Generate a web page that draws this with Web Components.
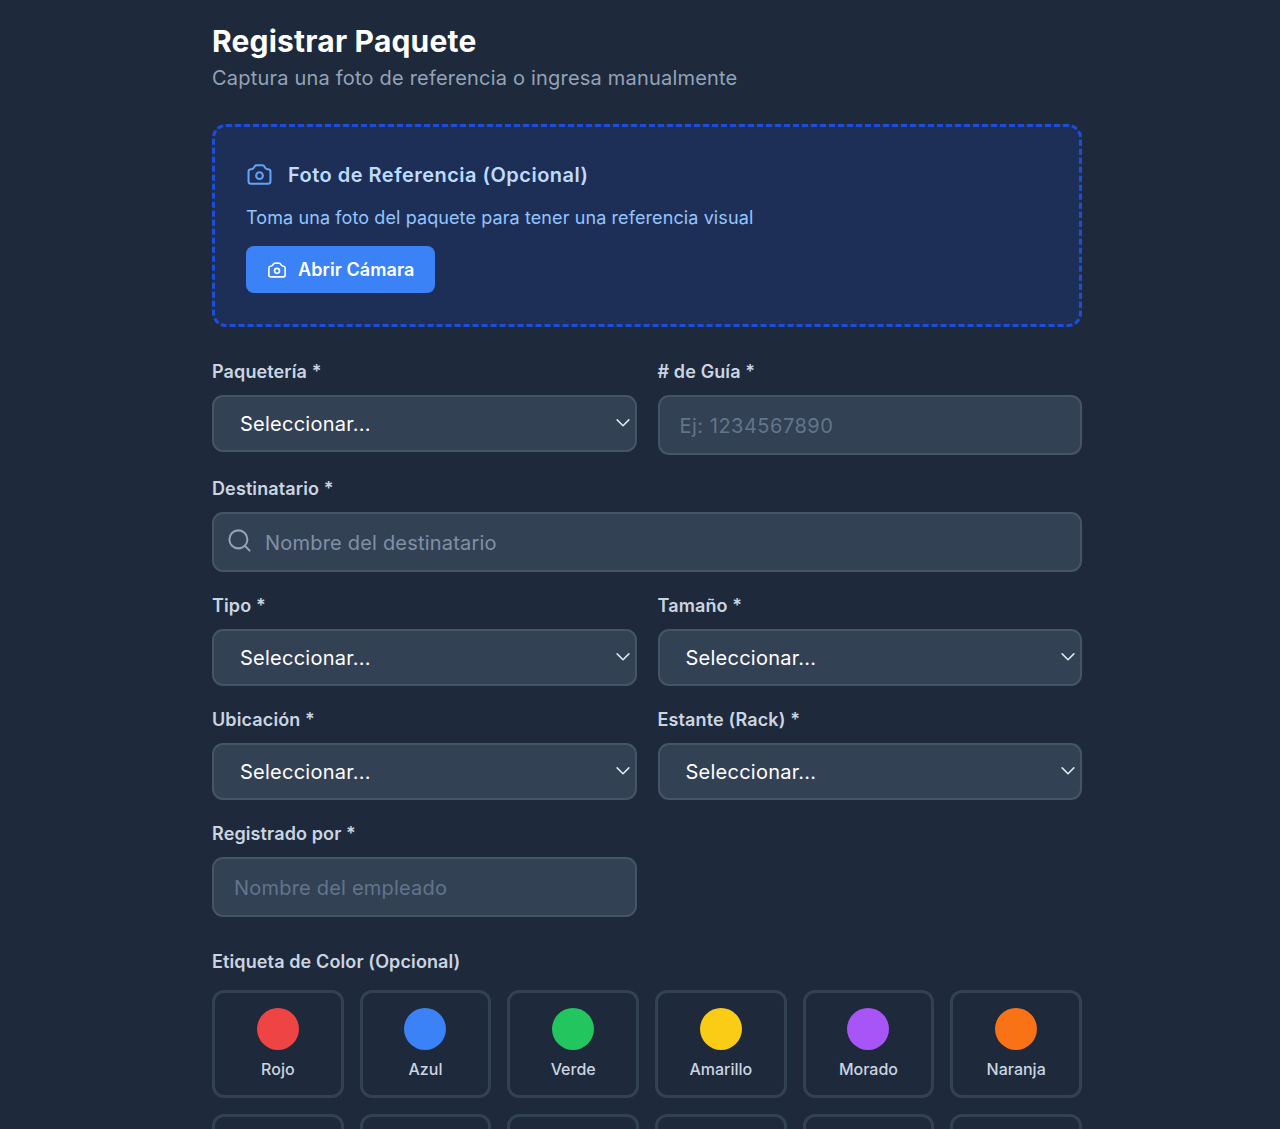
<!DOCTYPE html>
<html lang="es"><head><meta charset="utf-8"><title>Registrar Paquete</title>
<style>
html,body{margin:0;height:1129px;overflow:hidden;background:#1e293b}
body{font-family:Inter,"Noto Sans",sans-serif;color:#fff;-webkit-font-smoothing:antialiased}
</style></head><body>
<register-page></register-page>
<script>
const CAM='<svg viewBox="0 0 24 24" fill="none" stroke="currentColor" stroke-width="2" stroke-linecap="round" stroke-linejoin="round"><path d="M6.827 6.175A2.31 2.31 0 0 1 5.186 7.23c-.38.054-.757.112-1.134.175C2.999 7.58 2.25 8.507 2.25 9.574V18a2.25 2.25 0 0 0 2.25 2.25h15A2.25 2.25 0 0 0 21.75 18V9.574c0-1.067-.75-1.994-1.802-2.169a47.865 47.865 0 0 0-1.134-.175 2.31 2.31 0 0 1-1.64-1.055l-.822-1.316a2.192 2.192 0 0 0-1.736-1.039 48.774 48.774 0 0 0-5.232 0 2.192 2.192 0 0 0-1.736 1.039l-.821 1.316Z"/><circle cx="12" cy="13" r="3"/></svg>';
function def(name,css,html){customElements.define(name,class extends HTMLElement{constructor(){super();this.attachShadow({mode:'open'}).innerHTML='<style>'+css+'</style>'+(typeof html==='function'?html(this):html)}})}

def('photo-card',`:host{display:block;box-sizing:border-box;height:203px;border:3px dashed #1d4ed8;border-radius:14px;background:#1e2f57;padding:28px 32px 0 31px}
.h{display:flex;align-items:center;gap:15px;height:40px;font-size:20px;font-weight:600;color:#bfdbfe;letter-spacing:.48px}
.h svg{width:27px;height:27px;color:#60a5fa;stroke-width:1.8;margin-top:-2px}
p{margin:10px 0 0;font-size:18px;line-height:26px;color:#93c5fd;letter-spacing:.1px}
.b{display:inline-flex;align-items:center;gap:11px;box-sizing:border-box;height:47px;margin-top:15px;padding:0 21px;border-radius:8px;background:#3b82f6;color:#fff;font-size:18px;font-weight:600;letter-spacing:.08px}
.b svg{width:20px;height:20px;stroke-width:1.9}`,
`<div class="h">${CAM}<span>Foto de Referencia (Opcional)</span></div><p>Toma una foto del paquete para tener una referencia visual</p><div class="b">${CAM}<span>Abrir Cámara</span></div>`);

def('form-field',`:host{display:block;min-width:0}
label{display:block;font-size:18px;font-weight:600;line-height:24px;color:#cbd5e1;letter-spacing:.12px;margin-bottom:var(--label-gap,11px)}`,
`<label><slot name="label"></slot></label><slot></slot>`);

def('select-box',`:host{display:flex;align-items:center;box-sizing:border-box;height:57px;padding:0 3px 0 26px;background:#334155;border:2px solid #465468;border-radius:11px;color:#fff;font-size:20px;font-weight:400;letter-spacing:.25px}
span{flex:1}svg{width:18px;height:18px;color:#e2e8f0;margin-top:-2px}`,
`<span><slot></slot></span><svg viewBox="0 0 20 20" fill="none" stroke="currentColor" stroke-width="1.7" stroke-linecap="round" stroke-linejoin="round"><path d="M3.500 6.500 10 13l6.500-6.500"/></svg>`);

def('text-box',`:host{display:flex;align-items:center;box-sizing:border-box;height:60px;padding:1px 20px 0;background:#334155;border:2px solid #465468;border-radius:11px;color:#64748b;font-size:20px;letter-spacing:.2px;gap:12px}
:host([search]){color:#8190a5;padding-left:13px}
svg{width:27px;height:27px;color:#94a3b8;margin:-5px 0 0 -1px;flex:none}`,
h=>(h.hasAttribute('search')?`<svg viewBox="0 0 24 24" fill="none" stroke="currentColor" stroke-width="1.8" stroke-linecap="round"><circle cx="11" cy="11" r="8"/><path d="m21 21-4.300-4.300"/></svg>`:'')+`<span><slot></slot></span>`);

def('color-tile',`:host{display:flex;flex-direction:column;align-items:center;box-sizing:border-box;height:108px;padding-top:15px;border:3px solid #334155;border-radius:12px;color:#cbd5e1;font-size:16px;font-weight:500}
i{display:block;width:42px;height:42px;border-radius:50%;background:var(--c)}
span{margin-top:8px;line-height:23px}`,
h=>`<i style="--c:${h.getAttribute('color')||'transparent'}"></i><span><slot></slot></span>`);

def('form-row',`:host{display:grid;grid-template-columns:1fr 1fr;gap:21px}`,`<slot></slot>`);
def('color-grid',`:host{display:grid;grid-template-columns:repeat(6,1fr);gap:16px}`,`<slot></slot>`);

def('register-page',`:host{display:block;width:870px;margin:0 auto 0 212px;padding-top:20px}
h1{margin:0;font-size:30px;line-height:42px;font-weight:700;color:#fff;letter-spacing:.2px}
.s{font-size:20px;line-height:30px;color:#94a3b8;margin:1px 0 31px;letter-spacing:.2px}`,
`<h1>Registrar Paquete</h1><div class="s">Captura una foto de referencia o ingresa manualmente</div>
<photo-card></photo-card>
<form-row style="margin-top:33px"><form-field><span slot="label">Paquetería *</span><select-box>Seleccionar...</select-box></form-field><form-field><span slot="label"># de Guía *</span><text-box style="letter-spacing:.5px">Ej: 1234567890</text-box></form-field></form-row>
<form-field style="margin-top:22px"><span slot="label">Destinatario *</span><text-box search>Nombre del destinatario</text-box></form-field>
<form-row style="margin-top:22px"><form-field><span slot="label">Tipo *</span><select-box>Seleccionar...</select-box></form-field><form-field><span slot="label">Tamaño *</span><select-box>Seleccionar...</select-box></form-field></form-row>
<form-row style="margin-top:22px"><form-field><span slot="label">Ubicación *</span><select-box>Seleccionar...</select-box></form-field><form-field><span slot="label">Estante (Rack) *</span><select-box>Seleccionar...</select-box></form-field></form-row>
<form-row style="margin-top:22px"><form-field><span slot="label">Registrado por *</span><text-box>Nombre del empleado</text-box></form-field><div></div></form-row>
<form-field style="margin-top:33px;--label-gap:16px"><span slot="label">Etiqueta de Color (Opcional)</span>
<color-grid><color-tile color="#ef4444">Rojo</color-tile><color-tile color="#3b82f6">Azul</color-tile><color-tile color="#22c55e">Verde</color-tile><color-tile color="#facc15">Amarillo</color-tile><color-tile color="#a855f7">Morado</color-tile><color-tile color="#f97316">Naranja</color-tile><color-tile></color-tile><color-tile></color-tile><color-tile></color-tile><color-tile></color-tile><color-tile></color-tile><color-tile></color-tile></color-grid></form-field>`);
</script></body></html>
